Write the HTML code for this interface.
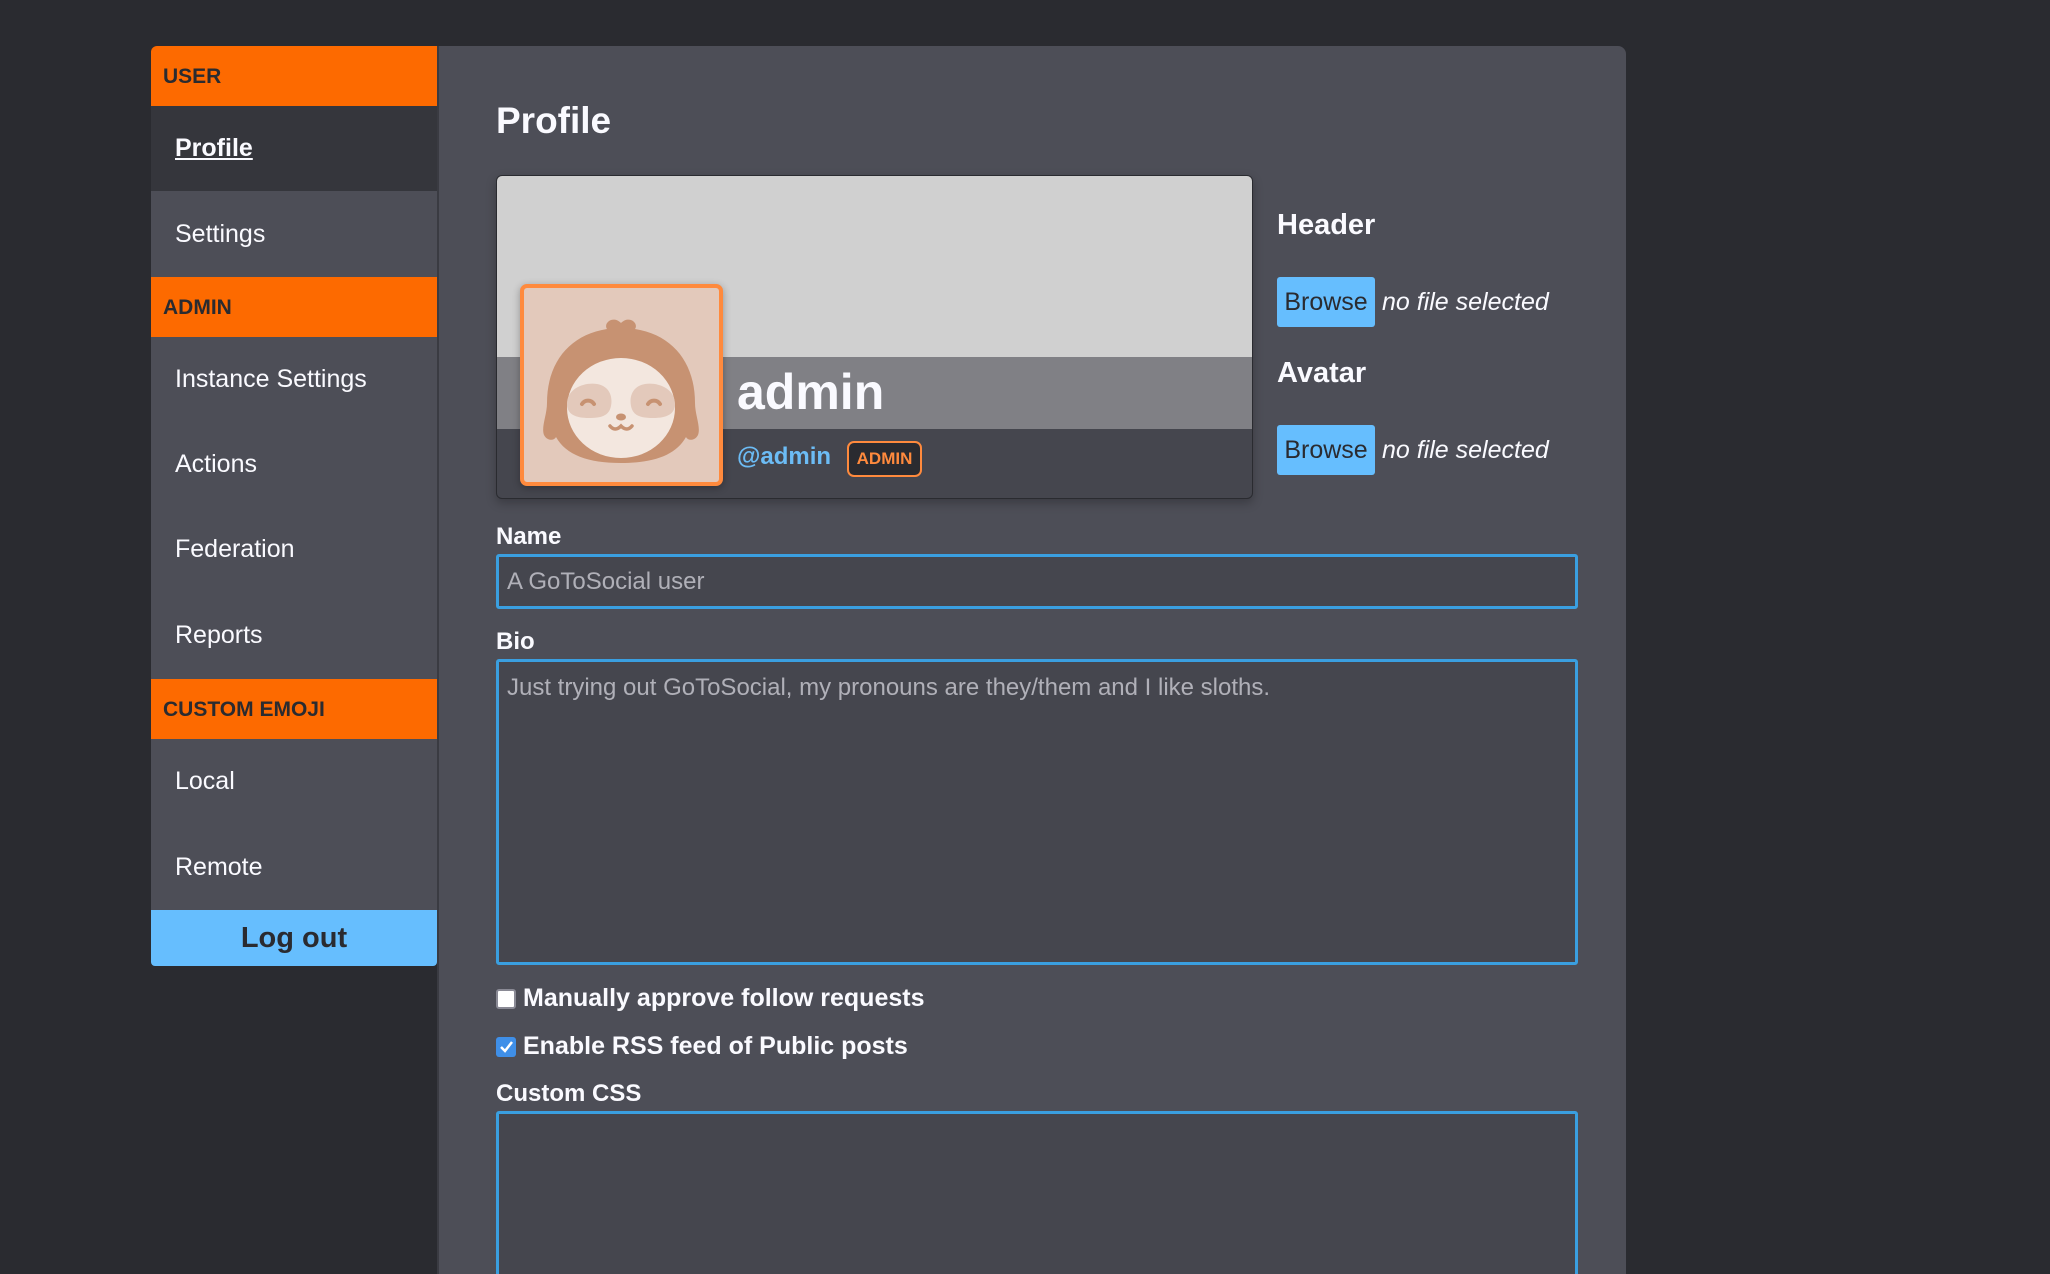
<!DOCTYPE html>
<html><head><meta charset="utf-8"><style>
*{box-sizing:border-box;margin:0;padding:0}
html,body{width:2050px;height:1274px;overflow:hidden}
body{background:#2a2b30;font-family:"Liberation Sans",sans-serif;position:relative;color:#fafaff}
.abs{position:absolute}
.hd{position:absolute;left:151px;width:286px;height:60px;background:#fd6a00;color:#2a2b30;font-weight:bold;font-size:21px;padding-left:12px;line-height:62px}
.it{position:absolute;left:151px;width:286px;background:#4d4e57;color:#fafaff;font-size:25px;padding-left:24px;display:flex;align-items:center}
.panel{left:437px;top:46px;width:1189px;height:1228px;background:#4d4e57;border-radius:0 8px 0 0;border-left:2px solid #3a3b42}
.lbl{position:absolute;left:496px;font-weight:bold;font-size:24px}
.inp{position:absolute;left:496px;width:1082px;border:3px solid #3a9fe0;background:#45464e;border-radius:3px;color:#b0b0b8;font-size:24px;padding-left:8px}
.btn{position:absolute;left:1277px;width:98px;height:50px;background:#66befe;color:#2a2b30;font-size:25px;line-height:50px;text-align:center;border-radius:3px}
.nf{position:absolute;left:1382px;font-style:italic;font-size:25px}
</style></head><body>
<div class="abs panel"></div>
<div class="hd" style="top:46px;border-radius:6px 0 0 0">USER</div>
<div class="it" style="top:106px;height:85px;background:#35363c;font-weight:bold;text-decoration:underline">Profile</div>
<div class="it" style="top:191px;height:86px">Settings</div>
<div class="hd" style="top:277px">ADMIN</div>
<div class="it" style="top:337px;height:85px">Instance Settings</div>
<div class="it" style="top:422px;height:85px">Actions</div>
<div class="it" style="top:507px;height:85px">Federation</div>
<div class="it" style="top:592px;height:87px">Reports</div>
<div class="hd" style="top:679px">CUSTOM EMOJI</div>
<div class="it" style="top:739px;height:85px">Local</div>
<div class="it" style="top:824px;height:86px">Remote</div>
<div class="abs" style="left:151px;top:910px;width:286px;height:56px;background:#66befe;color:#2a2b30;font-weight:bold;font-size:29px;text-align:center;line-height:56px;border-radius:0 0 4px 4px">Log out</div>

<div class="abs" style="left:496px;top:100px;font-size:37px;font-weight:bold">Profile</div>

<div class="abs" style="left:496px;top:175px;width:757px;height:324px;border-radius:6px;overflow:hidden;border:1px solid #2a2b30;background:#45464e;box-shadow:0 4px 10px rgba(0,0,0,.25)">
 <div class="abs" style="left:0;top:0;width:100%;height:181px;background:#d0d0d0"></div>
 <div class="abs" style="left:0;top:181px;width:100%;height:72px;background:#808085"></div>
</div>
<div class="abs" style="left:520px;top:284px;width:203px;height:202px;border:4px solid #ff8a3d;border-radius:7px;background:#e3c9bb;box-shadow:0 2px 8px rgba(0,0,0,.3)">
<svg width="195" height="194" viewBox="0 0 195 194">
 <path d="M97 35c-8-8-18 0-14 6c-38 6-60 34-60 74c0 12-6 24-3 32c3 6 10 6 12 2c10 18 32 26 65 26s55-8 65-26c2 4 9 4 12-2c3-8-3-20-3-32c0-40-22-68-60-74c4-6-6-14-14-6z" fill="#c79272"/>
 <ellipse cx="97" cy="120" rx="54" ry="50" fill="#f3e7df"/>
 <path d="M43 116c0-16 18-22 30-20c12 2 16 12 14 22c-2 10-10 12-22 12c-14 0-22-4-22-14z M151 116c0-16-18-22-30-20c-12 2-16 12-14 22c2 10 10 12 22 12c14 0 22-4 22-14z" fill="#e3c9bb"/>
 <path d="M58 116a7 7 0 0 1 12 0 M124 116a7 7 0 0 1 12 0" stroke="#c79272" stroke-width="4" fill="none" stroke-linecap="round"/>
 <ellipse cx="97" cy="129" rx="5" ry="3.5" fill="#c79272"/>
 <path d="M86 138q5 6 11 0q6 6 11 0" stroke="#c79272" stroke-width="3.5" fill="none" stroke-linecap="round"/>
</svg></div>
<div class="abs" style="left:737px;top:362px;font-size:50px;font-weight:bold;line-height:60px">admin</div>
<div class="abs" style="left:737px;top:443px;font-size:24px;font-weight:bold;color:#6cbcf5">@admin</div>
<div class="abs" style="left:847px;top:441px;width:75px;height:36px;border:2px solid #ff8a3d;border-radius:7px;background:#2a2b30;color:#ff8a3d;font-weight:bold;font-size:17px;text-align:center;line-height:32px">ADMIN</div>

<div class="abs" style="left:1277px;top:209px;font-size:29px;font-weight:bold">Header</div>
<div class="btn" style="top:277px">Browse</div>
<div class="nf" style="top:288px">no file selected</div>
<div class="abs" style="left:1277px;top:357px;font-size:29px;font-weight:bold">Avatar</div>
<div class="btn" style="top:425px">Browse</div>
<div class="nf" style="top:436px">no file selected</div>

<div class="lbl" style="top:523px">Name</div>
<div class="inp" style="top:554px;height:55px;line-height:49px">A GoToSocial user</div>
<div class="lbl" style="top:628px">Bio</div>
<div class="inp" style="top:659px;height:306px;padding-top:12px">Just trying out GoToSocial, my pronouns are they/them and I like sloths.</div>

<div class="abs" style="left:496px;top:989px;width:20px;height:20px;background:#fff;border:2px solid #8a8a95;border-radius:3px"></div>
<div class="lbl" style="left:523px;top:984px;font-size:25px">Manually approve follow requests</div>
<div class="abs" style="left:496px;top:1037px;width:20px;height:20px;background:#3f8fe8;border-radius:3px"><svg width="20" height="20"><path d="M5 10l4 4l7-9" stroke="#fff" stroke-width="2.5" fill="none"/></svg></div>
<div class="lbl" style="left:523px;top:1032px;font-size:25px">Enable RSS feed of Public posts</div>
<div class="lbl" style="top:1080px">Custom CSS</div>
<div class="inp" style="top:1111px;height:200px"></div>
</body></html>
